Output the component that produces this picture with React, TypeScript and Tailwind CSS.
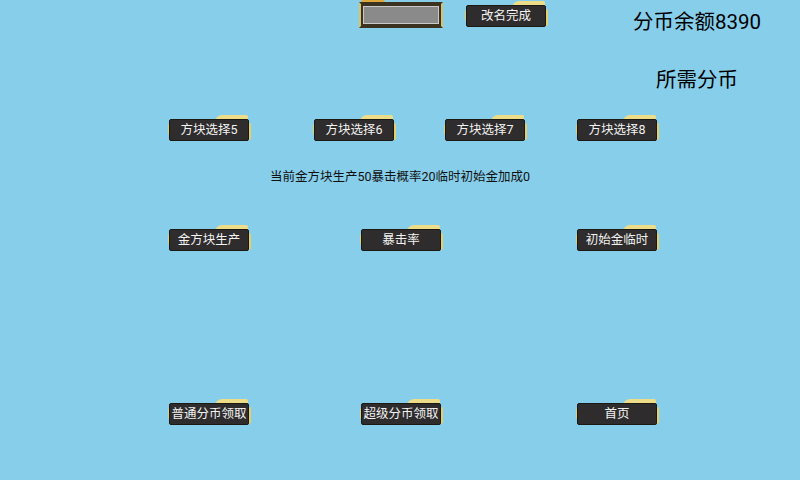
import clsx from "clsx";

const font = { fontFamily: "Roboto, 'Noto Sans CJK SC', sans-serif" };

function GameButton({ label, className }: { label: string; className?: string }) {
  return (
    <div className={clsx("relative h-[27px] w-[83px] shrink-0", className)}>
      {/* gold tab at the top right */}
      <div className="absolute right-[3px] top-0 h-[9px] w-[33px] rounded-tl-[7px] rounded-tr-[2px] bg-[#eedd88]" />
      {/* gold trim on the right and left edges */}
      <div className="absolute right-0 top-[8px] bottom-[2px] w-[4px] rounded-[2px] bg-[#e2cf72]" />
      <div className="absolute left-0 top-[9px] h-[11px] w-[4px] rounded-[2px] bg-[#e2cf72]" />
      {/* dark body */}
      <div className="absolute left-[1px] right-[2px] top-[4px] bottom-[1px] flex items-center justify-center rounded-[2px] border border-[#1c1812] bg-[#2e2c2c]">
        <span className="text-[12.5px] leading-none text-[#f2f2f2]">{label}</span>
      </div>
    </div>
  );
}

export default function App() {
  return (
    <div className="h-[480px] w-[800px] overflow-hidden bg-[#87ceeb] text-black" style={font}>
      {/* top: name input, rename button, coin totals */}
      <div className="flex h-[112px]">
        <div className="relative ml-[359px] h-[28px] w-[84px] shrink-0">
          <div className="absolute left-[2px] top-0 h-[4px] w-[24px] rounded-t-[2px] bg-[#e0a83a]" />
          <div className="absolute inset-x-0 bottom-0 top-[2px] border-2 border-[#3b3320] border-x-[#d9c36a] bg-[#3b3320] p-[2px]">
            <div className="h-full w-full border border-[#c9c9c9] bg-[#8a8a8a]" />
          </div>
        </div>
        <GameButton label="改名完成" className="ml-[22px] mt-[1px]" />
        <div className="ml-auto mr-[22px] flex w-[162px] flex-col items-center">
          <div className="mt-[9px] text-[20.5px] leading-[26px]">分币余额8390</div>
          <div className="mt-[32px] text-[20.5px] leading-[26px]">所需分币</div>
        </div>
      </div>

      {/* block selection */}
      <div className="mt-[3px] flex">
        <GameButton label="方块选择5" className="ml-[168px]" />
        <GameButton label="方块选择6" className="ml-[62px]" />
        <GameButton label="方块选择7" className="ml-[48px]" />
        <GameButton label="方块选择8" className="ml-[49px]" />
      </div>

      <div className="mt-[27px] text-center text-[12.5px] leading-[16px] text-[#111]">
        当前金方块生产50暴击概率20临时初始金加成0
      </div>

      {/* upgrades */}
      <div className="mt-[40px] flex">
        <GameButton label="金方块生产" className="ml-[168px]" />
        <GameButton label="暴击率" className="ml-[109px]" />
        <GameButton label="初始金临时" className="ml-[133px]" />
      </div>

      {/* bottom actions */}
      <div className="mt-[147px] flex">
        <GameButton label="普通分币领取" className="ml-[168px]" />
        <GameButton label="超级分币领取" className="ml-[109px]" />
        <GameButton label="首页" className="ml-[133px]" />
      </div>
    </div>
  );
}
